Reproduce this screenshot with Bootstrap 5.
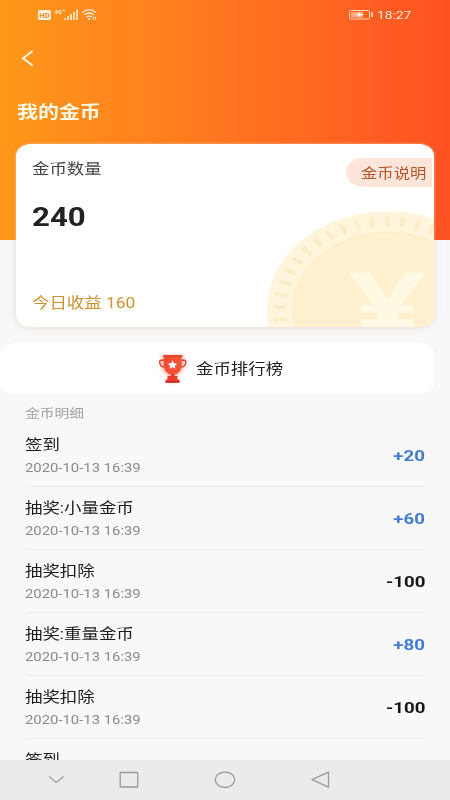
<!DOCTYPE html>
<html lang="zh-CN">
<head>
<meta charset="utf-8">
<meta name="viewport" content="width=device-width, initial-scale=1">
<title>我的金币</title>
<link href="https://cdn.jsdelivr.net/npm/bootstrap@5.3.0/dist/css/bootstrap.min.css" rel="stylesheet">
<style>
body{font-family:Roboto,"Noto Sans CJK SC",sans-serif;background:#f8f8f8;height:800px;overflow:hidden}
.screen{width:450px;height:800px}
.hero{height:240px;margin-bottom:-96px;background:linear-gradient(90deg,#ff981a 0,#ff7620 50%,#ff5223 100%)}
.status{height:29px;padding:0 38px 0 38px}
.status-end{width:64px}
/* wide lettering */
.wide{display:inline-block;white-space:nowrap;transform:scaleX(1.219);transform-origin:0 50%}
.wide-end{transform-origin:100% 50%}
.clock{font-size:11.3px;line-height:14px;color:#ffe9d6;margin:0 0 6px 2px}
.back{height:58px;padding:21px 0 0 21px}
.page-title{font-size:17.2px;line-height:24px;font-weight:700;color:#fffbe6;padding-left:17px;margin-top:13px}
.coin-card{height:183px;margin:0 16px;border-radius:15px/12px;background:#fff;box-shadow:0 1px 9px rgba(130,90,60,.13),0 0 3px rgba(255,235,210,.7)}
.coin-art{right:0;bottom:0;width:168px;height:117px;border-bottom-right-radius:15px 12px}
.card-inner{padding:14px 2px 13px 15.5px}
.card-top{height:22px}
.label{font-size:14.3px;line-height:22px;color:#444}
.total{font-size:25.6px;line-height:30px;font-weight:700;color:#222;margin-top:22px}
.income{font-size:14.3px;line-height:22px;color:#cc922f}
.tip{width:86px;height:29px;padding-left:15px;line-height:31px;font-size:13.4px;color:#b5552b;background:#fde5d9;border-radius:17px 0 0 17px/14.5px 0 0 14.5px}
.rank{width:434px;height:51px;margin-top:16px;border-radius:15px/12px;background:#fff;padding-left:156px}
.rank-text{font-size:14.3px;line-height:22px;color:#222;margin:1px 0 0 6.5px}
.details{padding:0 25px;height:366px}
.section-title{font-size:12.1px;line-height:18px;color:#a2a2a2;padding-top:11px;height:30px}
.entry{height:63px;border-bottom:1px solid #ebebeb;padding-top:10px}
.entry-name{font-size:14.3px;line-height:22px;color:#1c1c1c}
.entry-time{font-size:12.2px;line-height:16px;color:#8b8b8b;margin-top:4px}
.amount{font-size:15.3px;line-height:20px;font-weight:700;color:#151515;margin-top:12px}
.plus{color:#437bd0}
.softkeys{height:40px;background:#ebebeb}
</style>
</head>
<body>
<div class="screen d-flex flex-column overflow-hidden">
  <header class="hero flex-shrink-0">
    <div class="status d-flex justify-content-between align-items-end">
      <svg width="64" height="22" viewBox="38 7 64 22" class="flex-shrink-0">
        <rect x="38" y="10" width="13" height="10" rx="1.8" fill="#fff0dc"/>
        <text x="39.3" y="18" font-size="8" font-weight="700" textLength="10.6" lengthAdjust="spacingAndGlyphs" fill="#ef8d35">HD</text>
        <text x="54.5" y="13.6" font-size="5.5" font-weight="700" textLength="7.5" lengthAdjust="spacingAndGlyphs" fill="#ffeedb">4G</text>
        <path d="M63.8 9.2v2.4M62.7 10.4h2.4" stroke="#ffeedb" stroke-width=".7"/>
        <path d="M65 20v-2M68 20v-4M71 20v-6M74 20v-8M77 20V9.5" stroke="#ffeedb" stroke-width="1.6"/>
        <g fill="none" stroke="#ffeedb" stroke-width="1.3"><path d="M82.3 12.4q7-5.4 13.6 0M84.3 14.8q4.9-3.6 9.6 0M86.5 17.1q2.6-1.9 5.2 0"/></g>
        <circle cx="89.2" cy="19" r="1.1" fill="#ffeedb"/>
        <path d="M93.2 16.6v3.2M95.5 16.6v3.2" stroke="#ffeedb" stroke-width="1"/>
      </svg>
      <div class="status-end d-flex align-items-end">
        <svg width="27" height="21" viewBox="348 8 27 21" class="flex-shrink-0">
          <rect x="349.5" y="10.5" width="20" height="8.5" rx=".8" fill="none" stroke="#ffd2b3"/>
          <rect x="351" y="12" width="12" height="5.5" fill="#ffc4a0" opacity=".75"/>
          <path d="M354.5 14.6l4.2-.8.7-2 .9 2 4 .8-4 .8-.9 2-.7-2z" fill="#fff"/>
          <path d="M372 12v5" stroke="#ffe3cf" stroke-width="1.6"/>
        </svg>
        <div class="clock"><span class="wide">18:27</span></div>
      </div>
    </div>
    <div class="back"><svg width="14" height="17" viewBox="0 0 14 17" class="d-block"><path d="M11.5 1L2 8.200l9.500 7.200" fill="none" stroke="#fffbe6" stroke-width="1.900"/></svg></div>
    <div class="page-title"><span class="wide">我的金币</span></div>
  </header>

  <section class="coin-card position-relative flex-shrink-0">
    <svg class="coin-art position-absolute" viewBox="266 210 168 117">
      <g transform="translate(387.5 310) scale(1.219 1)">
        <circle r="99" fill="#fef5dc"/>
        <circle r="88.5" fill="none" stroke="#fbebc6" stroke-width="10" pathLength="45" stroke-dasharray=".3 .7" stroke-dashoffset=".15" transform="rotate(-90)"/>
        <circle r="77.5" fill="#feefce" stroke="#feedc6" stroke-width="1.5"/>
        <text transform="scale(1.06 .83)" x="0" y="33" text-anchor="middle" font-family="Noto Sans" font-weight="700" font-size="107" fill="#fff8e3">¥</text>
      </g>
    </svg>
    <div class="card-inner position-relative h-100 d-flex flex-column">
      <div class="card-top d-flex justify-content-between align-items-start">
        <div class="label"><span class="wide">金币数量</span></div>
        <div class="tip flex-shrink-0"><span class="wide">金币说明</span></div>
      </div>
      <div class="total"><span class="wide">240</span></div>
      <div class="income mt-auto"><span class="wide">今日收益 160</span></div>
    </div>
  </section>

  <section class="rank d-flex align-items-center flex-shrink-0">
    <svg width="33" height="36" viewBox="156 351 33 36" class="flex-shrink-0">
      <defs>
        <filter id="glow" x="-40%" y="-40%" width="180%" height="180%"><feGaussianBlur stdDeviation="2"/></filter>
        <linearGradient id="cup" x1="0" x2="1" y1="0" y2="0"><stop offset="0" stop-color="#ef4938"/><stop offset=".55" stop-color="#fa5135"/><stop offset="1" stop-color="#ec5836"/></linearGradient>
      </defs>
      <path d="M162 356h21v9q-1 9-8 9.500V382h-5v-7.500q-7-1-8-9.500z" fill="#ff6a48" opacity=".75" filter="url(#glow)"/>
      <path d="M164 360.300h-2.800q-1.700 0-1.500 2.200.6 4.500 5.300 4.700M181.500 360.300h2.800q1.700 0 1.500 2.200-.6 4.500-5.300 4.700" fill="none" stroke="#e6432f" stroke-width="1.500"/>
      <path d="M163.300 355.200h19v1.700h-.8v9q-.5 6.500-6.500 8.500h-4.500q-6-2-6.500-8.500v-9h-.7z" fill="url(#cup)"/>
      <path d="M163.300 356h19" stroke="#d93a29" stroke-width="1.300"/>
      <path d="M171.200 374h3.300v2h3v3.500h2v3h-14v-3h2V376h3.700z" fill="#e93a2a"/>
      <path d="M165.500 382h14" stroke="#c5281e" stroke-width="1.400"/>
      <path d="M172.500 360.500l1.400 2.800 3.400.4-2.500 2 .7 3-3-1.500-3 1.500.7-3-2.500-2 3.400-.4z" fill="#fff"/>
    </svg>
    <div class="rank-text"><span class="wide">金币排行榜</span></div>
  </section>

  <main class="details overflow-hidden flex-shrink-0">
    <div class="section-title"><span class="wide">金币明细</span></div>
    <div class="entry d-flex justify-content-between"><div><div class="entry-name"><span class="wide">签到</span></div><div class="entry-time"><span class="wide">2020-10-13 16:39</span></div></div><div class="amount plus"><span class="wide wide-end">+20</span></div></div>
    <div class="entry d-flex justify-content-between"><div><div class="entry-name"><span class="wide">抽奖:小量金币</span></div><div class="entry-time"><span class="wide">2020-10-13 16:39</span></div></div><div class="amount plus"><span class="wide wide-end">+60</span></div></div>
    <div class="entry d-flex justify-content-between"><div><div class="entry-name"><span class="wide">抽奖扣除</span></div><div class="entry-time"><span class="wide">2020-10-13 16:39</span></div></div><div class="amount"><span class="wide wide-end">-100</span></div></div>
    <div class="entry d-flex justify-content-between"><div><div class="entry-name"><span class="wide">抽奖:重量金币</span></div><div class="entry-time"><span class="wide">2020-10-13 16:39</span></div></div><div class="amount plus"><span class="wide wide-end">+80</span></div></div>
    <div class="entry d-flex justify-content-between"><div><div class="entry-name"><span class="wide">抽奖扣除</span></div><div class="entry-time"><span class="wide">2020-10-13 16:39</span></div></div><div class="amount"><span class="wide wide-end">-100</span></div></div>
    <div class="entry"><div class="entry-name"><span class="wide">签到</span></div></div>
  </main>

  <nav class="softkeys flex-shrink-0">
    <svg width="450" height="40" viewBox="0 760 450 40" class="d-block" fill="none" stroke="#9b9b9b" stroke-width="1.3">
      <path d="M49 776.500l7.300 6 7.300-6"/>
      <rect x="120.2" y="772.5" width="17.5" height="14.5" rx=".5"/>
      <ellipse cx="225" cy="779.8" rx="9.7" ry="7.7"/>
      <path d="M328.500 772.200v15L312 779.700z" stroke-linejoin="round"/>
    </svg>
  </nav>
</div>
<script src="https://cdn.jsdelivr.net/npm/bootstrap@5.3.0/dist/js/bootstrap.bundle.min.js"></script>
</body>
</html>
